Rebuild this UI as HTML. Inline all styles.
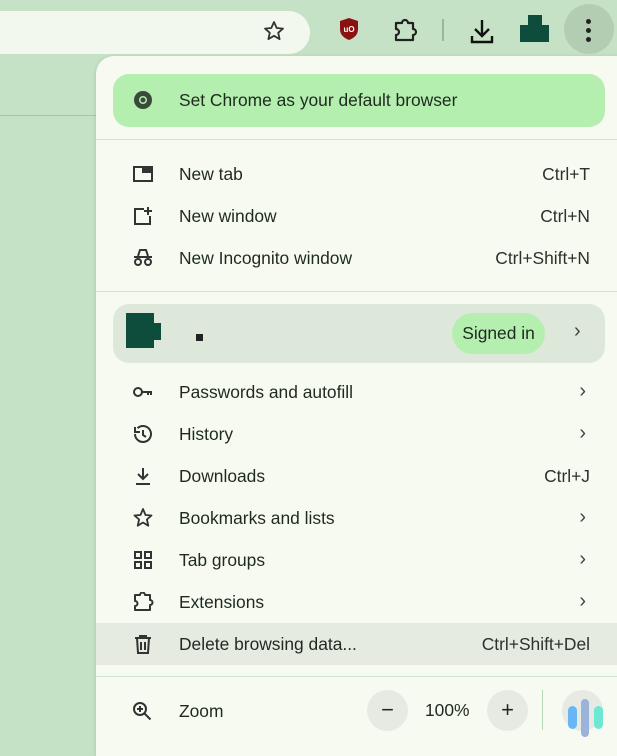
<!DOCTYPE html>
<html><head><style>
*{margin:0;padding:0;box-sizing:border-box}
body{width:617px;height:742px;overflow:hidden;background:#c6e2c6;font-family:"Liberation Sans",sans-serif;color:#1f2a1f;position:relative}
.addr{position:absolute;left:-20px;top:11px;width:330px;height:43px;background:#f3f8ef;border-radius:22px}
.line{position:absolute;left:0;top:115px;width:96px;height:1px;background:#a9c3a9}
.menu{position:absolute;left:96px;top:56px;width:540px;height:700px;background:#f7faf1;border-radius:18px 0 0 0;box-shadow:0 1px 4px rgba(0,0,0,.15)}
.it{position:absolute;left:96px;width:521px;height:42px;font-size:17.4px;line-height:42px}
.it .t{position:absolute;left:83px}
.it .k{position:absolute;right:27px;color:#2a332a}
.it svg{position:absolute;left:36px;top:11px}
.chev{position:absolute;right:31px;top:-1px;font-size:20px;color:#444}
.div{position:absolute;left:96px;width:521px;height:1px;background:#cfe5cb}
</style></head><body>
<div class="addr"></div>
<svg style="position:absolute;left:262px;top:19px" width="24" height="24" viewBox="0 0 24 24"><path d="M12 3l2.7 6 6.3.6-4.8 4.2 1.4 6.3L12 16.8 6.4 20.1l1.4-6.3L3 9.6l6.3-.6z" fill="none" stroke="#333" stroke-width="1.8" stroke-linejoin="round"/></svg>
<svg style="position:absolute;left:338px;top:17px" width="22" height="24" viewBox="0 0 22 24"><path d="M11 1L2 4v8c0 6 4 9 9 11 5-2 9-5 9-11V4z" fill="#8c1111"/><text x="11" y="15" font-size="8" fill="#fff" text-anchor="middle" font-family="Liberation Sans" font-weight="bold">uO</text></svg>
<svg style="position:absolute;left:392px;top:18px" width="26" height="26" viewBox="0 0 26 26"><path d="M4 5h6a3 3 0 0 1 6 0h5v6a3 3 0 0 1 0 6v5H4v-5a3 3 0 0 0 0-6z" fill="none" stroke="#222" stroke-width="2.2" stroke-linejoin="round"/></svg>
<div style="position:absolute;left:442px;top:19px;width:2px;height:22px;background:#9db59d"></div>
<svg style="position:absolute;left:468px;top:17px" width="28" height="28" viewBox="0 0 28 28"><path d="M14 3v15M7 12l7 7 7-7M4 19v6h20v-6" fill="none" stroke="#111" stroke-width="2.4"/></svg>
<div style="position:absolute;left:520px;top:25px;width:29px;height:17px;background:#0e4d3c"></div>
<div style="position:absolute;left:528px;top:15px;width:14px;height:10px;background:#0e4d3c"></div>
<div style="position:absolute;left:564px;top:4px;width:50px;height:50px;border-radius:25px;background:#b3cdb3"></div>
<div style="position:absolute;left:586px;top:19px;width:5px;height:5px;border-radius:3px;background:#222;box-shadow:0 9px 0 #222,0 18px 0 #222"></div>
<div class="line"></div>
<div class="menu"></div>
<div style="position:absolute;left:113px;top:74px;width:492px;height:53px;background:#b4efb0;border-radius:16px"></div>
<svg style="position:absolute;left:132px;top:89px" width="22" height="22" viewBox="0 0 22 22"><circle cx="11" cy="11" r="9" fill="#3a4a3a"/><circle cx="11" cy="11" r="4" fill="#b4efb0"/><circle cx="11" cy="11" r="2.5" fill="#3a4a3a"/></svg>
<div style="position:absolute;left:179px;top:90px;font-size:17.4px">Set Chrome as your default browser</div>
<div class="div" style="top:139px"></div>
<div class="it" style="top:153px"><svg width="22" height="20"><rect x="2" y="3" width="18" height="14" fill="none" stroke="#333" stroke-width="2"/><rect x="10" y="4" width="9" height="5" fill="#333"/></svg><span class="t">New tab</span><span class="k">Ctrl+T</span></div>
<div class="it" style="top:195px"><svg width="22" height="20"><path d="M12 3H3v15h15V10M16 1v8M12 5h8" fill="none" stroke="#333" stroke-width="2"/></svg><span class="t">New window</span><span class="k">Ctrl+N</span></div>
<div class="it" style="top:237px"><svg width="22" height="20"><path d="M2 9h18M6 8l2-6h6l2 6" fill="none" stroke="#333" stroke-width="2"/><circle cx="6" cy="14" r="3" fill="none" stroke="#333" stroke-width="2"/><circle cx="16" cy="14" r="3" fill="none" stroke="#333" stroke-width="2"/></svg><span class="t">New Incognito window</span><span class="k">Ctrl+Shift+N</span></div>
<div class="div" style="top:291px"></div>
<div style="position:absolute;left:113px;top:304px;width:492px;height:59px;background:#dde8da;border-radius:16px"></div>
<div style="position:absolute;left:126px;top:313px;width:28px;height:35px;background:#0e4d3c"></div>
<div style="position:absolute;left:154px;top:323px;width:7px;height:17px;background:#0e4d3c"></div>
<div style="position:absolute;left:196px;top:334px;width:7px;height:7px;background:#222"></div>
<div style="position:absolute;left:452px;top:313px;width:93px;height:41px;background:#b4efb0;border-radius:21px;font-size:17.4px;line-height:41px;text-align:center">Signed in</div>
<div style="position:absolute;left:574px;top:320px;font-size:20px;color:#444">›</div>
<div class="it" style="top:371px"><svg width="22" height="20"><circle cx="6" cy="10" r="4" fill="none" stroke="#333" stroke-width="2"/><path d="M10 10h10M16 10v3M19 10v3" stroke="#333" stroke-width="2"/></svg><span class="t">Passwords and autofill</span><span class="chev">›</span></div>
<div class="it" style="top:413px"><svg width="22" height="20"><path d="M3 10a8 8 0 1 0 2.5-5.8M3 3v5h5M11 6v5l3 2" fill="none" stroke="#333" stroke-width="2"/></svg><span class="t">History</span><span class="chev">›</span></div>
<div class="it" style="top:455px"><svg width="22" height="20"><path d="M11 2v11M6 8l5 5 5-5M4 18h14" fill="none" stroke="#333" stroke-width="2"/></svg><span class="t">Downloads</span><span class="k">Ctrl+J</span></div>
<div class="it" style="top:497px"><svg width="22" height="20"><path d="M11 1l2.5 6 6 .5-4.6 4 1.4 6.2L11 14.5 5.7 17.7l1.4-6.2-4.6-4 6-.5z" fill="none" stroke="#333" stroke-width="1.8" stroke-linejoin="round"/></svg><span class="t">Bookmarks and lists</span><span class="chev">›</span></div>
<div class="it" style="top:539px"><svg width="22" height="20"><g fill="none" stroke="#333" stroke-width="2"><rect x="3" y="2" width="6" height="6"/><rect x="13" y="2" width="6" height="6"/><rect x="3" y="12" width="6" height="6"/><rect x="13" y="12" width="6" height="6"/></g></svg><span class="t">Tab groups</span><span class="chev">›</span></div>
<div class="it" style="top:581px"><svg width="22" height="20"><path d="M3 3h5a2.5 2.5 0 0 1 5 0h5v5a2.5 2.5 0 0 1 0 5v5H3v-4a2.5 2.5 0 0 0 0-5z" fill="none" stroke="#333" stroke-width="2" stroke-linejoin="round"/></svg><span class="t">Extensions</span><span class="chev">›</span></div>
<div class="it" style="top:623px;background:#e6ebe2"><svg width="22" height="20"><path d="M3 4h16M8 4V2h6v2M5 4l1 15h10l1-15M9 8v8M13 8v8" fill="none" stroke="#333" stroke-width="2"/></svg><span class="t">Delete browsing data...</span><span class="k">Ctrl+Shift+Del</span></div>
<div class="div" style="top:676px"></div>
<div class="it" style="top:690px"><svg width="22" height="20"><circle cx="8" cy="8" r="6" fill="none" stroke="#333" stroke-width="2"/><path d="M12.5 12.5l6 6M5 8h6M8 5v6" stroke="#333" stroke-width="2"/></svg><span class="t">Zoom</span></div>
<div style="position:absolute;left:367px;top:690px;width:41px;height:41px;border-radius:21px;background:#e7eae3;text-align:center;line-height:40px;font-size:22px">−</div>
<div style="position:absolute;left:425px;top:700px;font-size:17.4px">100%</div>
<div style="position:absolute;left:487px;top:690px;width:41px;height:41px;border-radius:21px;background:#e7eae3;text-align:center;line-height:40px;font-size:22px">+</div>
<div style="position:absolute;left:542px;top:690px;width:1px;height:40px;background:#b9d9b6"></div>
<div style="position:absolute;left:562px;top:690px;width:41px;height:41px;border-radius:21px;background:#e7eae3"></div>
<div style="position:absolute;left:568px;top:706px;width:9px;height:23px;border-radius:5px;background:#6ab6f5"></div>
<div style="position:absolute;left:581px;top:699px;width:8px;height:38px;border-radius:4px;background:#9ab3d9"></div>
<div style="position:absolute;left:594px;top:706px;width:9px;height:23px;border-radius:5px;background:#6ee8d3"></div>
</body></html>
